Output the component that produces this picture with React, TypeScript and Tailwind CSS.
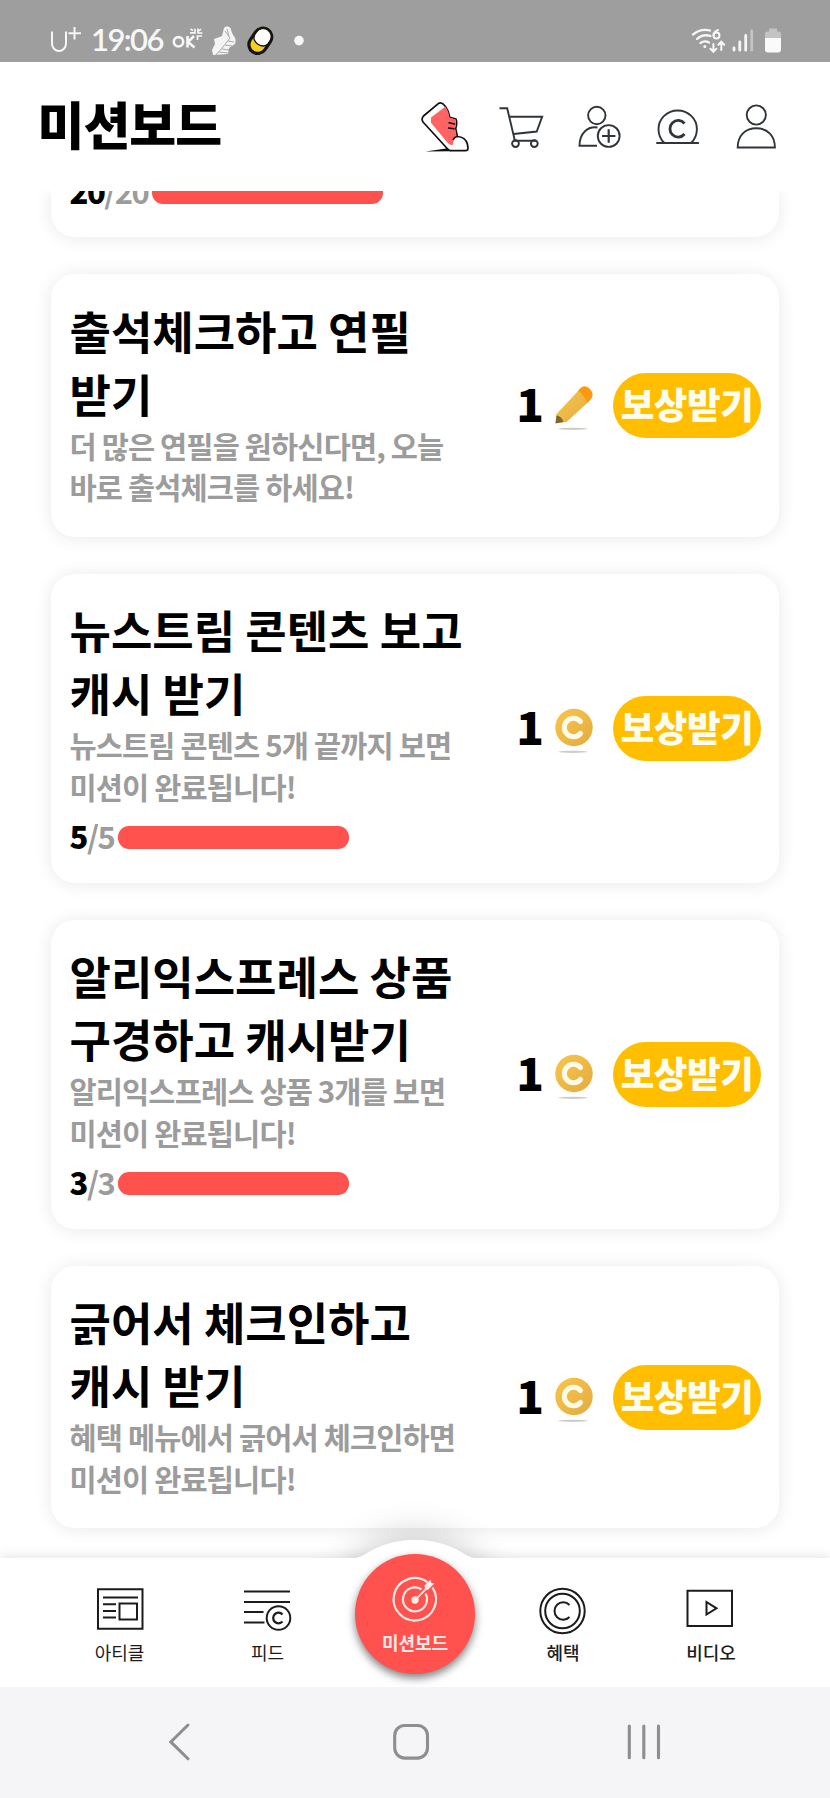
import React from "react";

type Reward = "pencil" | "coin";

interface Mission {
  title: string[];
  desc: string[];
  reward: Reward;
  progress?: string;
}

const missions: Mission[] = [
  {
    title: ["출석체크하고 연필", "받기"],
    desc: ["더 많은 연필을 원하신다면, 오늘", "바로 출석체크를 하세요!"],
    reward: "pencil",
  },
  {
    title: ["뉴스트림 콘텐츠 보고", "캐시 받기"],
    desc: ["뉴스트림 콘텐츠 5개 끝까지 보면", "미션이 완료됩니다!"],
    reward: "coin",
    progress: "5",
  },
  {
    title: ["알리익스프레스 상품", "구경하고 캐시받기"],
    desc: ["알리익스프레스 상품 3개를 보면", "미션이 완료됩니다!"],
    reward: "coin",
    progress: "3",
  },
  {
    title: ["긁어서 체크인하고", "캐시 받기"],
    desc: ["혜택 메뉴에서 긁어서 체크인하면", "미션이 완료됩니다!"],
    reward: "coin",
  },
];

function StatusBar() {
  return (
    <div className="flex h-[62px] shrink-0 items-start justify-between bg-[#9e9e9e]">
      <div className="flex h-full items-start pl-[48px] pt-[22px] text-[#f7f7f7]">
        <svg className="h-[36px] w-[43px] shrink-0" viewBox="48 22 43 36" fill="none" stroke="currentColor" strokeWidth="2">
          <path d="M52 31.500V43.500a7 7.500 0 0 0 14 0V31.500M74.500 27v12.500M68.500 33.300H81" />
        </svg>
        <span className="w-[76px] whitespace-nowrap font-['Lato'] text-[31px] font-semibold leading-[35px] tracking-[-1.6px]">19:06</span>
        <svg className="h-[40px] w-[150px] shrink-0" viewBox="167 22 150 40" fill="none" stroke="currentColor" strokeWidth="2.600">
          <circle cx="178.500" cy="41.800" r="4.700" />
          <path d="M187.500 36v11.500M194 36l-6 6 6.500 5.500" />
          <path strokeWidth="1.700" d="M190 32.800h5v-4M198 28.500v4.500h4.500M190.500 29l2.500 1.500M201 29l-2 2M197.500 40v-4h4.500" />
          <path fill="#f4f4f4" stroke="none" d="M224 28c3-3 7-1 7 2l2 5c3 3 3 6 2 9l-6 4-1 6-15 1-1-5 3-6-1-5 3-1 5-2z" />
          <path stroke="#aaaaaa" strokeWidth="1" d="M225 31l5 7-7 9-7 8M228 41l6 1M225 45l7 1M222 49l7 1M219 52l9 1M227 29l2 7" />
          <g transform="rotate(34 260.500 40.500)">
            <rect x="251.700" y="27.300" width="17.600" height="27" rx="8.800" fill="#f5cf1c" stroke="#16140c" strokeWidth="3.200" />
            <path fill="#fff" stroke="none" d="M253.300 40.500v-5a7.200 7.200 0 0 1 14.400 0v5a7.200 4.800 0 0 1-14.400 0z" />
            <path stroke="#16140c" strokeWidth="1.300" d="M253 40a7.500 5 0 0 0 15 0" />
          </g>
          <circle cx="299" cy="40.600" r="4.800" fill="currentColor" stroke="none" />
        </svg>
      </div>
      <svg className="mr-[40px] mt-[22px] h-[36px] w-[102px]" viewBox="688 22 102 36" fill="none" stroke="#f7f7f7" strokeWidth="2.300" strokeLinecap="round">
        <path d="M693 34.500q8-6.500 17-4M697 39q6-5.500 13.500-3M700.500 43q4-3 8.500-.500" />
        <circle cx="704.800" cy="46.500" r="1.500" fill="#f7f7f7" stroke="none" />
        <path strokeWidth="2" d="M718 30q-4.500 2-4.500 5.300" />
        <circle cx="716.500" cy="35.500" r="3" strokeWidth="2" />
        <path strokeWidth="2" d="M713.400 44v7.500M710.500 48.800l2.900 3 2.900-3M721.300 50v-8M718.400 44.700l2.900-3 2.900 3" />
        <path strokeWidth="2.800" d="M734 48v2.200M739.800 42v8.200M745.700 35.500v14.700" />
        <path strokeWidth="2.800" stroke="#c3c3c3" d="M751.700 31v19.200" />
        <path stroke="none" fill="#c3c3c3" d="M769 28.500h8v3h1.500q2.500 0 2.500 2.500v5h-16v-5q0-2.500 2.500-2.500h1.500z" />
        <path stroke="none" fill="#fafafa" d="M765 38h16v11.500q0 3-3 3h-10q-3 0-3-3z" />
      </svg>
    </div>
  );
}

function Header() {
  const icon = "h-[60px] w-[78px] shrink-0";
  return (
    <header className="relative z-10 flex h-[129px] shrink-0 items-start justify-between bg-white pl-[37.500px] pr-[34px]">
      <h1 className="mt-[24px] text-[51px] font-black leading-[74px] tracking-[-1px] text-black">미션보드</h1>
      <div className="mt-[34px] flex text-[#30353a]">
        <svg className={icon} viewBox="406 96 78 60" fill="none" stroke="#111" strokeWidth="1.700" strokeLinejoin="round" strokeLinecap="round">
          <path fill="#111" stroke="none" d="M425.500 151.500l22-3.300 4 3z" />
          <path fill="#fff" d="M438.300 103.600q3.500-2 7 2.600 3.400 4.500 4.400 11l6.300 1.800q1.500 4-.300 9.500l1.700 8q8 .5 10 7.500l.600 4q0 2.700-2.500 2.700H450.500q-2-.500-4-3L423 122q-2-3 .500-6z" />
          <path fill="#ff6363" stroke="none" d="M431 117.500l14.500-11q3 4.500 4 11l6 2q1 4-.500 9l1.300 6.500q-3 4-3.500 10-3 .5-5-2L431 122.700z" />
          <path strokeWidth="1.500" d="M449 122.800l5.500 1.200M448.500 128l5.500.800" />
          <path d="M457.300 136.300q-2.500.500-4 3" />
        </svg>
        <svg className={icon} viewBox="484 96 78 60" fill="none" stroke="currentColor" strokeWidth="1.900">
          <path d="M499.500 108.300h7.700l7.700 32.500M510 116.700h32.200l-5.500 14.800-23 2.500M513 140.800h23" />
          <circle cx="515.500" cy="143.600" r="3.400" />
          <circle cx="534.300" cy="143.600" r="3.400" />
        </svg>
        <svg className={icon} viewBox="562 96 78 60" fill="none" stroke="currentColor" strokeWidth="1.900">
          <circle cx="596.800" cy="115.500" r="8.700" />
          <path d="M597.500 127.500c-10-1.500-18 6-18 18.200H597" />
          <circle cx="608.700" cy="136" r="10.900" />
          <path strokeWidth="2.200" d="M602 136h13.400M608.700 129.300v13.400" />
        </svg>
        <svg className={icon} viewBox="640 96 78 60" fill="none" stroke="currentColor" strokeWidth="1.900">
          <path d="M656.300 143h42.600M664.500 143c-4-3.500-6-8.500-6-14a19.200 18.500 0 0 1 38.400 0c0 5.500-2 10.500-6 14" />
          <path strokeWidth="2.800" d="M684.500 123.500a8.200 8.300 0 1 0 0 10.500" />
        </svg>
        <svg className={icon} viewBox="718 96 78 60" fill="none" stroke="currentColor" strokeWidth="1.900">
          <circle cx="756.300" cy="115" r="9.600" />
          <path d="M737.700 147.500c0-11.500 7-19.200 18.600-19.200s18.600 7.700 18.600 19.200z" />
        </svg>
      </div>
    </header>
  );
}

function Progress({ value }: { value: string }) {
  return (
    <div className="flex h-[46.300px] items-center pt-[13.600px]">
      <div className="mb-[3px] mr-[4px] whitespace-nowrap text-[31px] font-black leading-[28px] tracking-[-1.5px] text-black">
        {value}
        <span className="font-bold text-[#9c9c9c]">/{value}</span>
      </div>
      <div className="h-[23px] w-[231px] rounded-[11px] bg-[#ff524f]" />
    </div>
  );
}

function RewardIcon({ kind }: { kind: Reward }) {
  return (
    <svg className="h-[48px] w-[40px]" viewBox="0 0 40 48" fill="none">
      <defs>
        <linearGradient id="gold" x1="0" y1="0" x2="1" y2="1">
          <stop offset="0" stopColor="#f8c64a" />
          <stop offset="1" stopColor="#e3ab40" />
        </linearGradient>
      </defs>
      {kind === "coin" ? (
        <>
          <circle cx="20" cy="19.500" r="18.700" fill="url(#gold)" />
          <path d="M26.500 13.500a9.200 9.200 0 1 0 0 12" stroke="#fffbe8" strokeWidth="5" strokeLinecap="round" />
        </>
      ) : (
        <>
          <path d="M2.500 29L25 5l11 10.500L12.500 37 1.500 38z" fill="url(#gold)" />
          <path d="M24 6l2-2.500q4-4 9-.500l2.500 3q2.500 4-.500 8L33.500 17.500Q29 9 24 6z" fill="#fb9a10" />
          <path d="M2.500 30.500q5 .500 7 6.500l-8 1.500z" fill="#826434" />
        </>
      )}
      <ellipse cx="19" cy="43.800" rx="14.500" ry="1.100" fill="#cfccc4" />
    </svg>
  );
}

function MissionCard({ mission }: { mission: Mission }) {
  return (
    <article className="flex shrink-0 items-center justify-between rounded-[24px] bg-white pl-[18.500px] pr-[18px] shadow-[0_1px_18px_rgba(0,0,0,0.09)]">
      <div className="pb-[29px] pt-[24.500px]">
        <h2 className="whitespace-nowrap text-[45px] font-bold leading-[63px] text-black">
          {mission.title.map((line) => (
            <span key={line} className="block">{line}</span>
          ))}
        </h2>
        <p className="whitespace-nowrap text-[29.500px] font-bold leading-[41.600px] tracking-[-0.850px] text-[#9c9c9c]">
          {mission.desc.map((line) => (
            <span key={line} className="block">{line}</span>
          ))}
        </p>
        {mission.progress && <Progress value={mission.progress} />}
      </div>
      <div className="flex items-center">
        <span className="mb-[7px] mr-[10px] text-[45.500px] font-black leading-[60px] text-black">1</span>
        <div className="mr-[19px] mt-[7px]">
          <RewardIcon kind={mission.reward} />
        </div>
        <button className="flex h-[65px] w-[148px] items-center justify-center rounded-full bg-[#ffbf00] pb-[3px] text-[36.500px] font-black leading-[54px] tracking-[-0.4px] whitespace-nowrap text-[#fffdf0]">
          보상받기
        </button>
      </div>
    </article>
  );
}

function NavItem({ label, bold, children }: { label: string; bold?: boolean; children: React.ReactNode }) {
  return (
    <div className="flex w-[148px] flex-col items-center pt-[24px] text-[#1c1c1c]">
      <svg className="h-[56px] w-[56px]" viewBox="0 0 56 56" fill="none" stroke="currentColor" strokeWidth="2">
        {children}
      </svg>
      <span className={bold ? "text-[18px] font-medium leading-[28px]" : "ml-px text-[18px] font-normal leading-[28px]"}>{label}</span>
    </div>
  );
}

function BottomNav() {
  return (
    <nav className="relative z-10 h-[129px] shrink-0">
      <div className="absolute left-[341px] top-[-18px] h-[148px] w-[148px] rounded-full bg-white shadow-[0_0_36px_4px_rgba(0,0,0,0.22)]" />
      <div className="relative flex h-[129px] bg-white px-[45px] shadow-[0_-3px_10px_rgba(0,0,0,0.09)]">
        <NavItem label="아티클">
          <path d="M7 7.300h44.500v39.500H7zM12 15.600h35M12 22.300h13M12 29h13M12 35.600h13M28.500 21.500h17.500v16h-17.500z" />
        </NavItem>
        <NavItem label="피드">
          <path d="M5 9.500h46M5 20h46M5 30h19.500M5 40.500h20.500" />
          <circle cx="39.500" cy="36" r="11.800" />
          <path strokeWidth="2.300" d="M43.500 32.500a5.300 5.300 0 1 0 0 7" />
        </NavItem>
        <div className="w-[148px]" />
        <NavItem label="혜택" bold>
          <circle cx="27.500" cy="29" r="22.200" />
          <circle cx="27.500" cy="29" r="17.300" />
          <path d="M34.500 23a8.700 8.700 0 1 0 0 12" />
        </NavItem>
        <NavItem label="비디오" bold>
          <path d="M4.500 8.700h44.500V44H4.500zM23.500 20v12.500L33.500 26.300z" />
        </NavItem>
      </div>
      <div className="absolute left-[336px] top-[-35px] h-[40px] w-[158px] overflow-hidden">
        <svg className="mt-[17px] h-[23px] w-[158px]" viewBox="336 1540 158 23" fill="#fff">
          <path d="M350 1563v-4q10-1 17-6 21-13 48-13t48 13q7 5 17 6v4z" />
        </svg>
      </div>
      <div className="absolute left-[355px] top-[-4px] flex h-[120px] w-[120px] flex-col items-center rounded-full bg-[#ff524f] pt-[20px] text-[#ffe9e6] shadow-[0_4px_9px_rgba(0,0,0,0.5)]">
        <svg className="h-[52px] w-[52px]" viewBox="389 1574 52 52" fill="none" stroke="currentColor" strokeWidth="2.200">
          <path d="M427.500 1582.300a21.200 21.200 0 1 0 5 5.300" />
          <path d="M421.500 1589.300a12 12 0 1 0 4 4.300" />
          <path strokeWidth="1.800" d="M415 1600l12-12" />
          <circle cx="415" cy="1600" r="3.700" fill="currentColor" stroke="none" />
          <path fill="#ffeceb" stroke="none" d="M425 1590l-.5-4.500 6-6 .700 3.300 3.200.700-6 6z" />
        </svg>
        <span className="mt-[3px] text-[18px] font-bold leading-[26px]">미션보드</span>
      </div>
    </nav>
  );
}

function SystemBar() {
  return (
    <div className="relative z-20 flex h-[111px] shrink-0 items-start justify-between bg-[#f5f5f7] pl-[160px] pr-[168px] pt-[29px] text-[#8e8e8e]">
      <svg className="h-[50px] w-[40px]" viewBox="160 1723 40 50" fill="none" stroke="currentColor" strokeWidth="3" strokeLinecap="round">
        <path d="M188 1732l-17.200 16.900 17.200 16.900" />
      </svg>
      <svg className="h-[50px] w-[40px]" viewBox="391 1723 40 50" fill="none" stroke="currentColor" strokeWidth="3.100">
        <rect x="394.700" y="1732.500" width="32.800" height="32.600" rx="10" />
      </svg>
      <svg className="h-[50px] w-[40px]" viewBox="622 1723 40 50" fill="none" stroke="currentColor" strokeWidth="3.100" strokeLinecap="round">
        <path d="M629.300 1733v31.800M643.800 1733v31.800M658.500 1733v31.800" />
      </svg>
    </div>
  );
}

export default function App() {
  return (
    <div className="flex h-[1798px] w-[830px] flex-col overflow-hidden bg-white font-['Noto_Sans_CJK_KR',sans-serif]">
      <StatusBar />
      <Header />
      <main className="flex h-[1367px] shrink-0 flex-col gap-[37px] overflow-hidden px-[51px]">
        <article className="flex h-[46px] shrink-0 flex-col justify-end rounded-b-[24px] bg-white pb-[29px] pl-[18.500px] shadow-[0_1px_18px_rgba(0,0,0,0.09)]">
          <Progress value="20" />
        </article>
        {missions.map((mission) => (
          <MissionCard key={mission.title[0]} mission={mission} />
        ))}
      </main>
      <BottomNav />
      <SystemBar />
    </div>
  );
}
